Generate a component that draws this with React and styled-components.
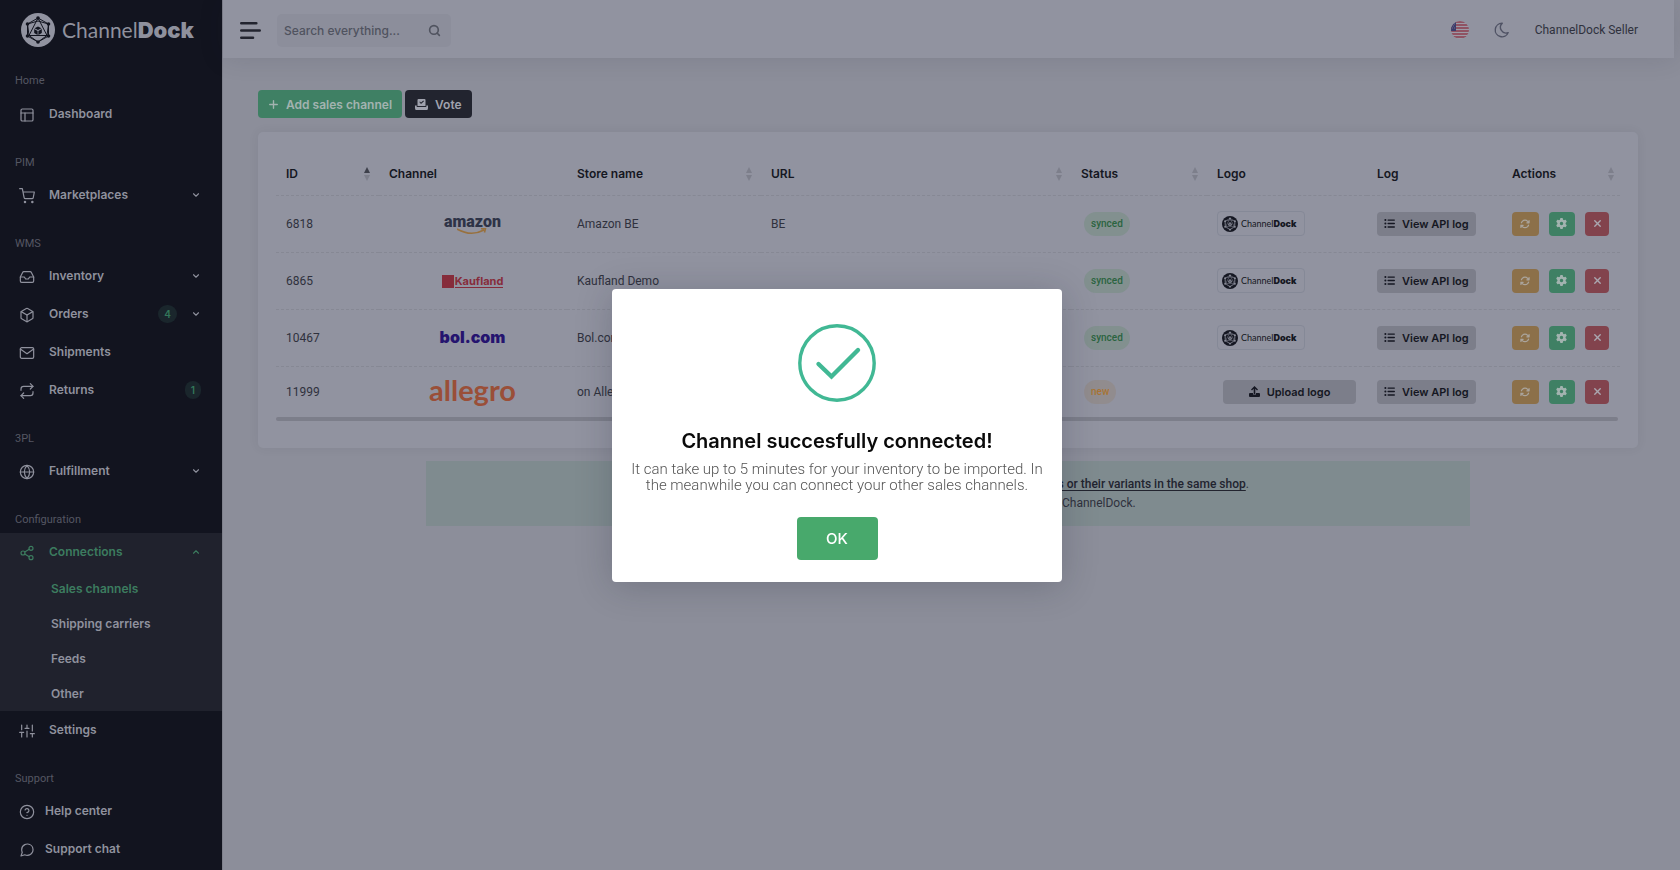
import React from "react";
import styled, { createGlobalStyle, css } from "styled-components";
import {
  FiLayout, FiShoppingCart, FiInbox, FiBox, FiMail, FiRepeat, FiGlobe, FiShare2,
  FiSliders, FiHelpCircle, FiMessageCircle, FiChevronDown, FiChevronUp, FiSearch,
} from "react-icons/fi";
import { TbMoon } from "react-icons/tb";
import { FaListUl, FaGear, FaXmark, FaArrowsRotate, FaPlus } from "react-icons/fa6";

const c = {
  side: "#12141f",
  sideActive: "#20222d",
  sideText: "#8f919d",
  sideMuted: "#555763",
  card: "#9193a0",
  page: "#8c8e9a",
  line: "#868894",
  ink: "#151722",
  text: "#2f313d",
  green: "#3f8064",
  greenText: "#3c7c5f",
  dark: "#22242f",
  grey: "#7c7e8a",
  amber: "#8c7049",
  red: "#82434d",
};

const plain = 'Roboto, "Liberation Sans", sans-serif';
const strong = 'Inter, "Liberation Sans", sans-serif';

const Global = createGlobalStyle`
  *, *::before, *::after { box-sizing: border-box; }
  body {
    margin: 0;
    background: ${c.page};
    color: ${c.text};
    font-family: ${plain};
    font-size: 12px;
    line-height: 18px;
  }
  button, input { font-family: ${strong}; }
  button { cursor: pointer; }
  a { color: inherit; text-decoration: none; }
`;

const Page = styled.div`
  display: flex;
  min-height: 100vh;
  padding-right: 6px;
`;

/* Sidebar */
const Sidebar = styled.nav`
  flex: none;
  width: 223px;
  background: ${c.side};
  border-right: 1px solid #7f818c;
  color: ${c.sideText};
`;
const Brand = styled.a`
  display: flex;
  align-items: center;
  gap: 7px;
  height: 60px;
  padding-left: 21px;
`;
const Wordmark = styled.span`
  font-family: Lato, sans-serif;
  font-size: ${(p) => (p.$small ? 9 : 21)}px;
  line-height: 24px;
  white-space: nowrap;
  strong {
    font-family: Inter, sans-serif;
    font-size: ${(p) => (p.$small ? 9 : 22)}px;
    font-weight: 900;
  }
`;
const SectionTitle = styled.h2`
  margin: 0;
  padding: ${(p) => (p.$first ? "14px 15px 7px" : "23px 15px 6px")};
  font-size: 11px;
  line-height: 14px;
  font-weight: 400;
  color: ${c.sideMuted};
`;
const NavLink = styled.a`
  display: flex;
  align-items: center;
  height: 38px;
  padding: 0 21px 0 19px;
  font-family: ${strong};
  font-weight: 600;
  color: ${(p) => (p.$active ? c.greenText : c.sideText)};
  > svg:first-child { margin: 2px ${(p) => (p.$tight ? 10 : 14)}px 0 0; flex: none; }
`;
const NavLabel = styled.span`flex: 1;`;
const Count = styled.span`
  padding: 0 6px;
  border-radius: 9px;
  background: #1a262c;
  color: #33785a;
  font-size: 10px;
  line-height: 18px;
  & + svg { margin-left: 14px; }
`;
const Group = styled.div`background: ${c.sideActive};`;
const SubLink = styled.a`
  display: flex;
  align-items: center;
  height: 35px;
  padding-left: 51px;
  font-family: ${strong};
  font-weight: 600;
  color: ${(p) => (p.$active ? c.greenText : c.sideText)};
`;

/* Header */
const Content = styled.div`
  flex: 1;
  min-width: 0;
`;
const Header = styled.header`
  display: flex;
  align-items: center;
  height: 58px;
  padding: 2px 36px 0 17px;
  background: ${c.card};
  box-shadow: 0 0 26px rgba(24, 28, 50, 0.12);
`;
const Bare = styled.button`
  display: flex;
  padding: 0;
  border: 0;
  background: none;
  color: #4f5264;
`;
const Search = styled.label`
  display: flex;
  align-items: center;
  width: 174px;
  height: 33px;
  margin: 0 auto 0 16px;
  padding: 0 10px 0 7px;
  border-radius: 5px;
  background: #8c8e9b;
  color: #50535f;
`;
const SearchInput = styled.input`
  flex: 1;
  min-width: 0;
  padding: 0;
  border: 0;
  outline: 0;
  background: none;
  font-size: 12px;
  font-weight: 500;
  color: ${c.text};
  &::placeholder { color: #50535f; opacity: 1; }
`;
const Tools = styled.div`
  display: flex;
  align-items: center;
  gap: 24px;
`;

/* Main */
const Main = styled.main`padding: 32px 36px 40px 35px;`;
const Actions = styled.div`
  display: flex;
  gap: ${(p) => p.$gap}px;
`;
const tones = {
  green: css`background: ${c.green}; color: #a3b3b0;`,
  dark: css`background: ${c.dark}; color: #a0a2ae;`,
  grey: css`background: ${c.grey}; color: ${c.ink};`,
  amber: css`background: ${c.amber}; color: #aaa49c;`,
  red: css`background: ${c.red}; color: #aaa7b0;`,
};
const Button = styled.button`
  display: flex;
  align-items: center;
  justify-content: center;
  gap: 7px;
  height: 28px;
  padding: 0 10px;
  border: 0;
  border-radius: 4px;
  font-size: 12px;
  font-weight: 600;
  white-space: nowrap;
  ${(p) => tones[p.$tone]}
`;
const SmallButton = styled(Button)`
  height: 24px;
  padding: 0 7px;
  font-size: 11px;
`;
const WideButton = styled(SmallButton)`
  width: calc(100% - 6px);
  margin-left: 6px;
`;
const IconButton = styled(SmallButton)`
  width: ${(p) => (p.$tone === "red" ? 24 : 27)}px;
  padding: 0;
`;
const Card = styled.section`
  margin-top: 14px;
  padding: 22px 18px 27px;
  border-radius: 5px;
  background: ${c.card};
  box-shadow: 0 0 12px rgba(24, 28, 50, 0.06);
`;
const Table = styled.table`
  width: 100%;
  table-layout: fixed;
  border-collapse: collapse;
`;
const Th = styled.th`
  height: 41px;
  padding: 0 9px 0 10px;
  border-bottom: 1px dashed ${c.line};
  text-align: left;
  font-family: ${strong};
  font-weight: 600;
  color: ${c.ink};
  &:last-child { padding-right: 6px; }
`;
const ThInner = styled.div`
  display: flex;
  align-items: center;
  justify-content: space-between;
`;
const Td = styled.td`
  height: 57px;
  padding: 0 11px 0 10px;
  border-bottom: 1px dashed ${c.line};
  text-align: ${(p) => (p.$center ? "center" : "left")};
  tr:last-child & { height: 51px; border-bottom: 0; }
`;
const Badge = styled.span`
  display: inline-block;
  margin-left: 3px;
  padding: 0 7px;
  border-radius: 12px;
  font-size: 10px;
  line-height: 24px;
  font-weight: 500;
  background: ${(p) => (p.$fresh ? "#918c8e" : "#82908f")};
  color: ${(p) => (p.$fresh ? "#a87434" : "#2b6440")};
`;
const LogoFrame = styled.span`
  display: flex;
  align-items: center;
  gap: 3px;
  width: 88px;
  height: 25px;
  padding-left: 4px;
  border: 1px solid #858997;
  border-radius: 4px;
  color: ${c.ink};
`;
const ScrollTrack = styled.div`
  height: 4px;
  margin-right: 2px;
  border-radius: 2px;
  background: ${c.grey};
`;
const Notice = styled.section`
  margin: 13px 168px 0;
  padding: 14px 20px 13px;
  background: #7f8b8f;
  text-align: center;
  white-space: nowrap;
  p { margin: 0; line-height: 19px; }
  a { color: ${c.dark}; font-weight: 500; text-decoration: underline; text-underline-offset: 2px; }
`;

/* Channel logos */
const Amazon = styled.span`
  display: inline-flex;
  flex-direction: column;
  align-items: center;
  padding-top: 3px;
  font-size: 16px;
  line-height: 13px;
  font-weight: 900;
  color: #2e3347;
  svg { display: block; }
`;
const Kaufland = styled.span`
  display: inline-flex;
  align-items: stretch;
  height: 13px;
  gap: 1px;
  vertical-align: middle;
  color: #862c3b;
  &::before { content: ""; width: 12px; background: #862c3b; }
  span {
    font-family: ${strong};
    font-size: 11px;
    line-height: 12px;
    font-weight: 700;
    border-bottom: 1px solid;
  }
`;
const Bol = styled.span`
  font-family: ${strong};
  font-size: 16px;
  font-weight: 900;
  color: #25146f;
`;
const Allegro = styled.span`
  display: block;
  padding-bottom: 4px;
  font-family: Lato, sans-serif;
  font-size: 29px;
  line-height: 30px;
  font-weight: 700;
  color: #9a4f38;
`;

/* Dialog */
const Backdrop = styled.div`
  position: fixed;
  inset: 0;
  display: flex;
  align-items: center;
  justify-content: center;
  padding-right: 6px;
`;
const Dialog = styled.div`
  display: flex;
  flex-direction: column;
  align-items: center;
  width: 450px;
  padding: 35px 15px 22px;
  border-radius: 4px;
  background: #fff;
  box-shadow: 0 4px 36px rgba(24, 26, 45, 0.22);
  text-align: center;
`;
const DialogTitle = styled.h1`
  margin: 25px 0 0;
  font-family: ${strong};
  font-size: 20px;
  line-height: 28px;
  font-weight: 600;
  color: #0a0a0a;
`;
const DialogText = styled.p`
  margin: 6px 0 0;
  font-size: 15px;
  line-height: 16px;
  font-weight: 300;
  color: #545454;
`;
const Confirm = styled.button`
  width: 81px;
  height: 43px;
  margin-top: 24px;
  border: 0;
  border-radius: 4px;
  background: #48a96c;
  color: #fff;
  font-size: 15px;
  font-weight: 500;
`;

const Emblem = ({ size, disc, ink }) => (
  <svg width={size} height={size} viewBox="0 0 34 34" aria-hidden="true">
    <circle cx="17" cy="17" r="17" fill={disc} />
    <g fill="none" stroke={ink} strokeWidth="1">
      <path d="M17 5 27.500 11v12L17 29 6.500 23V11z" />
      <path d="M17 5 26 22.500H8zM6.500 11 17 8l10.500 3M6.500 23 8 22.500M27.500 23 26 22.500M6.500 11 8 22.500 17 29l9-6.500 1.500-11.500" />
    </g>
    <g fill={ink}>
      <circle cx="17" cy="5" r="1.800" />
      <circle cx="27.500" cy="11" r="1.800" />
      <circle cx="27.500" cy="23" r="1.800" />
      <circle cx="17" cy="29" r="1.800" />
      <circle cx="6.500" cy="23" r="1.800" />
      <circle cx="6.500" cy="11" r="1.800" />
      <path d="m17 13.500 3.500 1.700-3.500 1.900-3.500-1.900zM13.200 16l3.400 1.900v4l-3.400-2zM20.800 16l-3.400 1.900v4l3.400-2z" />
    </g>
  </svg>
);

const SortIcon = ({ up }) => (
  <svg width="6" height="14" viewBox="0 0 6 14" aria-hidden="true">
    <path d="M3 0 6 6H0z" fill={up ? "#3e404b" : "#7d7f8b"} />
    <path d="M3 14 0 8h6z" fill="#7d7f8b" />
  </svg>
);

const Flag = () => (
  <svg width="18" height="18" viewBox="0 0 18 18" aria-hidden="true">
    <clipPath id="disc"><circle cx="9" cy="9" r="9" /></clipPath>
    <g clipPath="url(#disc)">
      <rect width="18" height="18" fill="#9c9aa6" />
      <path d="M0 1h18M0 4h18M0 7h18M0 10h18M0 13h18M0 16h18" stroke="#8a3d4e" strokeWidth="1.600" />
      <rect width="5" height="10" fill="#3b3c6b" />
      <path d="M1 3h3M2 5h2M1 7h3" stroke="#8d8fa4" strokeWidth=".6" strokeDasharray="1 1" />
    </g>
  </svg>
);

const BallotIcon = () => (
  <svg width="13" height="11" viewBox="0 0 13 11" fill="currentColor" aria-hidden="true">
    <path fillRule="evenodd" d="M3.500 0h6q1 0 1 1v6h-8V1q0-1 1-1zm.8 3 1.700 2L9 2.200l-.7-.7L6 3.600l-1-1z" />
    <path d="M0 9V6.500h1.700V8h9.600V6.500H13V9q0 2-1 2H1Q0 11 0 9z" />
  </svg>
);

const UploadIcon = () => (
  <svg width="11" height="11" viewBox="0 0 11 11" fill="currentColor" aria-hidden="true">
    <path d="M5.500 0 9 3.500l-1 1-1.700-1.700V8H4.700V2.800L3 4.500l-1-1z" />
    <path d="M1 7h3v1.500h3V7h3q1 0 1 1v2q0 1-1 1H1q-1 0-1-1V8q0-1 1-1z" />
  </svg>
);

const sections = [
  { title: "Home", items: [{ label: "Dashboard", icon: FiLayout }] },
  { title: "PIM", items: [{ label: "Marketplaces", icon: FiShoppingCart, more: true }] },
  {
    title: "WMS",
    items: [
      { label: "Inventory", icon: FiInbox, more: true },
      { label: "Orders", icon: FiBox, count: 4, more: true },
      { label: "Shipments", icon: FiMail },
      { label: "Returns", icon: FiRepeat, count: 1 },
    ],
  },
  { title: "3PL", items: [{ label: "Fulfillment", icon: FiGlobe, more: true }] },
  {
    title: "Configuration",
    items: [
      {
        label: "Connections",
        icon: FiShare2,
        children: ["Sales channels", "Shipping carriers", "Feeds", "Other"],
      },
      { label: "Settings", icon: FiSliders },
    ],
  },
  {
    title: "Support",
    items: [
      { label: "Help center", icon: FiHelpCircle, tight: true },
      { label: "Support chat", icon: FiMessageCircle, tight: true },
    ],
  },
];

const NavItem = ({ item }) => {
  const Icon = item.icon;
  const link = (
    <NavLink href="#" $active={!!item.children} $tight={item.tight}>
      <Icon size={16} strokeWidth={1.8} />
      <NavLabel>{item.label}</NavLabel>
      {item.count && <Count>{item.count}</Count>}
      {item.more && <FiChevronDown size={10} strokeWidth={2.6} />}
      {item.children && <FiChevronUp size={10} strokeWidth={2.6} />}
    </NavLink>
  );
  if (!item.children) return link;
  return (
    <Group>
      {link}
      {item.children.map((name, i) => (
        <SubLink href="#" key={name} $active={i === 0}>{name}</SubLink>
      ))}
    </Group>
  );
};

const columns = [
  { name: "ID", width: 103, sort: "up" },
  { name: "Channel", width: 188 },
  { name: "Store name", width: 194, sort: "both" },
  { name: "URL", width: 310, sort: "both" },
  { name: "Status", width: 136, sort: "both" },
  { name: "Logo", width: 160 },
  { name: "Log", width: 135 },
  { name: "Actions", width: 118, sort: "both" },
];

const AmazonLogo = () => (
  <Amazon>
    amazon
    <svg width="30" height="7" viewBox="0 0 30 7" fill="none" stroke="#98713f" strokeWidth="1.600">
      <path d="M0 1q14 8 27 1M24 0.800l4.500-.3-1 4" />
    </svg>
  </Amazon>
);

const rows = [
  { id: 6818, logo: <AmazonLogo />, store: "Amazon BE", url: "BE" },
  { id: 6865, logo: <Kaufland><span>Kaufland</span></Kaufland>, store: "Kaufland Demo" },
  { id: 10467, logo: <Bol>bol.com</Bol>, store: "Bol.com Demo" },
  { id: 11999, logo: <Allegro>allegro</Allegro>, store: "on Allegro", fresh: true },
];

export default function App() {
  return (
    <>
      <Global />
      <Page>
        <Sidebar>
          <Brand href="#">
            <Emblem size={34} disc="#9193a0" ink={c.side} />
            <Wordmark>Channel<strong>Dock</strong></Wordmark>
          </Brand>
          {sections.map((s, i) => (
            <React.Fragment key={s.title}>
              <SectionTitle $first={i === 0}>{s.title}</SectionTitle>
              {s.items.map((item) => <NavItem key={item.label} item={item} />)}
            </React.Fragment>
          ))}
        </Sidebar>
        <Content>
          <Header>
            <Bare aria-label="Toggle menu">
              <svg width="21" height="17" viewBox="0 0 21 17" stroke={c.dark} strokeWidth="2.600" strokeLinecap="round">
                <path d="M1.300 1.300h15M1.300 8.500h18.400M1.300 15.700h11.700" />
              </svg>
            </Bare>
            <Search>
              <SearchInput type="text" placeholder="Search everything..." aria-label="Search everything" />
              <FiSearch size={13} strokeWidth={3} />
            </Search>
            <Tools>
              <Bare aria-label="Language"><Flag /></Bare>
              <Bare aria-label="Dark mode"><TbMoon size={18} strokeWidth={1.8} /></Bare>
              <a href="#">ChannelDock Seller</a>
            </Tools>
          </Header>
          <Main>
            <Actions $gap={3}>
              <Button $tone="green"><FaPlus size={11} />Add sales channel</Button>
              <Button $tone="dark"><BallotIcon />Vote</Button>
            </Actions>
            <Card>
              <Table>
                <colgroup>
                  {columns.map((col) => <col key={col.name} width={col.width} />)}
                </colgroup>
                <thead>
                  <tr>
                    {columns.map((col) => (
                      <Th key={col.name}>
                        <ThInner>{col.name}{col.sort && <SortIcon up={col.sort === "up"} />}</ThInner>
                      </Th>
                    ))}
                  </tr>
                </thead>
                <tbody>
                  {rows.map((r) => (
                    <tr key={r.id}>
                      <Td>{r.id}</Td>
                      <Td $center>{r.logo}</Td>
                      <Td>{r.store}</Td>
                      <Td>{r.url}</Td>
                      <Td><Badge $fresh={r.fresh}>{r.fresh ? "new" : "synced"}</Badge></Td>
                      <Td>
                        {r.fresh ? (
                          <WideButton $tone="grey"><UploadIcon />Upload logo</WideButton>
                        ) : (
                          <LogoFrame>
                            <Emblem size={16} disc={c.ink} ink={c.card} />
                            <Wordmark $small>Channel<strong>Dock</strong></Wordmark>
                          </LogoFrame>
                        )}
                      </Td>
                      <Td><SmallButton $tone="grey"><FaListUl size={11} />View API log</SmallButton></Td>
                      <Td>
                        <Actions $gap={10}>
                          <IconButton $tone="amber" aria-label="Sync"><FaArrowsRotate size={10} /></IconButton>
                          <IconButton $tone="green" aria-label="Settings"><FaGear size={11} /></IconButton>
                          <IconButton $tone="red" aria-label="Delete"><FaXmark size={11} /></IconButton>
                        </Actions>
                      </Td>
                    </tr>
                  ))}
                </tbody>
              </Table>
              <ScrollTrack />
            </Card>
            <Notice>
              <p>Please note: a shop can only be connected once: <a href="#">never link the same products or their variants in the same shop</a>.</p>
              <p>This will cause problems with your inventory or orders in ChannelDock.</p>
            </Notice>
          </Main>
        </Content>
      </Page>
      <Backdrop>
        <Dialog role="dialog" aria-modal="true" aria-labelledby="dialog-title">
          <svg width="78" height="78" viewBox="0 0 78 78" fill="none" stroke="#41b894" aria-hidden="true">
            <circle cx="39" cy="39" r="37.200" strokeWidth="3.400" />
            <path d="M20.500 40 33.500 52.500 60 26" strokeWidth="4.400" strokeLinecap="round" />
          </svg>
          <DialogTitle id="dialog-title">Channel succesfully connected!</DialogTitle>
          <DialogText>It can take up to 5 minutes for your inventory to be imported. In the meanwhile you can connect your other sales channels.</DialogText>
          <Confirm>OK</Confirm>
        </Dialog>
      </Backdrop>
    </>
  );
}
